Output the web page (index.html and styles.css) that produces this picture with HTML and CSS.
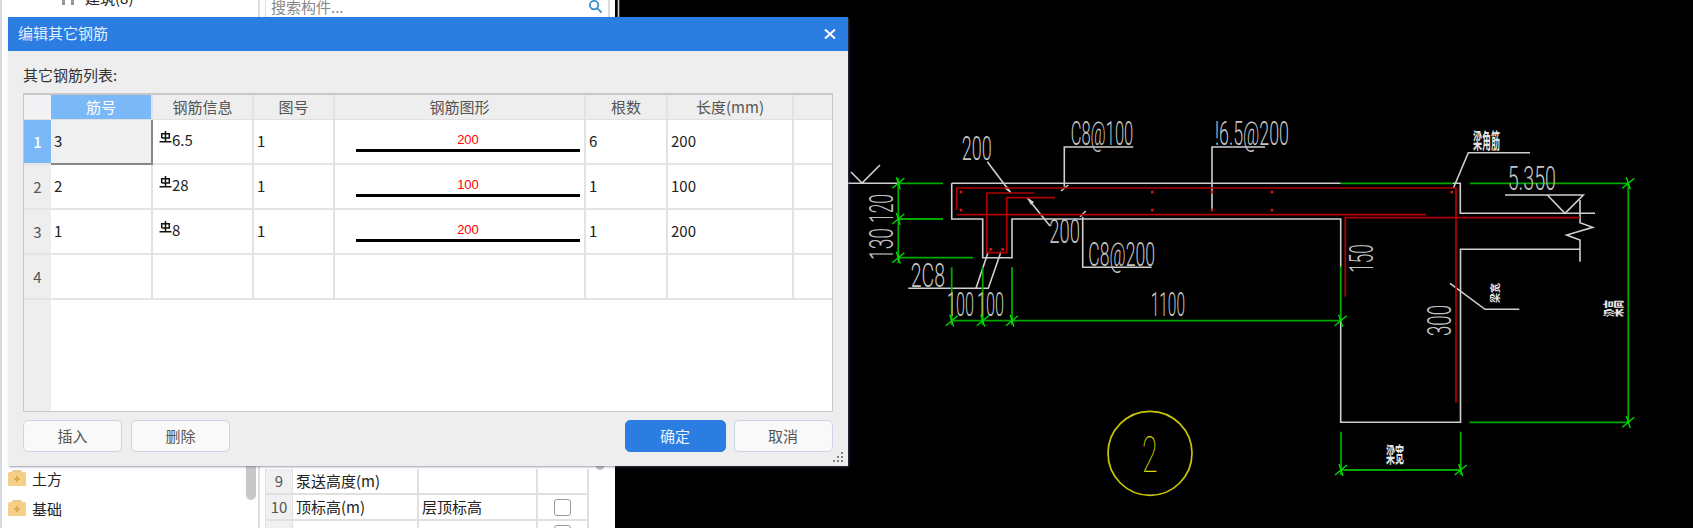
FILE: index.html
```html
<!DOCTYPE html>
<html lang="zh-CN">
<head>
<meta charset="utf-8">
<title>编辑其它钢筋</title>
<link rel="stylesheet" href="styles.css">
</head>
<body>
<div class="app">
  <aside class="tree">
    <div class="tree-row tree-row-top">
      <svg class="pillar" viewBox="0 0 16 10"><path d="M2 0h3v10H2zM11 0h3v10h-3z"/></svg>
      <span>建筑(8)</span>
    </div>
    <div class="tree-space"></div>
    <div class="tree-row">
      <svg class="folder" viewBox="0 0 18 17"><path class="folder-tab" d="M5 0h8l2 3H3z"/><rect class="folder-body" y="2" width="18" height="14" rx="1.5"/><path class="folder-plus" d="M9 6v6M6 9h6"/></svg>
      <span>土方</span>
    </div>
    <div class="tree-row">
      <svg class="folder" viewBox="0 0 18 17"><path class="folder-tab" d="M5 0h8l2 3H3z"/><rect class="folder-body" y="2" width="18" height="14" rx="1.5"/><path class="folder-plus" d="M9 6v6M6 9h6"/></svg>
      <span>基础</span>
    </div>
    <div class="tree-scroll"></div>
  </aside>

  <section class="props">
    <div class="search">
      <span>搜索构件...</span>
      <svg class="search-icon" viewBox="0 0 16 16"><circle cx="6.5" cy="6.5" r="4.5"/><path d="M10 10l4.5 4.5"/></svg>
    </div>
    <div class="props-space"></div>
    <div class="props-table">
      <div class="p-num">9</div><div class="p-cell">泵送高度(m)</div><div class="p-cell"></div><div class="p-cell"></div>
      <div class="p-num">10</div><div class="p-cell">顶标高(m)</div><div class="p-cell">层顶标高</div><div class="p-cell p-check"><span class="check"></span></div>
      <div class="p-num"></div><div class="p-cell"></div><div class="p-cell"></div><div class="p-cell p-check"><span class="check"></span></div>
    </div>
    <div class="props-scroll"></div>
  </section>

  <main class="canvas">
    <svg class="cad" viewBox="615 0 1078 528" width="1078" height="528">
      <defs>
        <g id="tk"><path d="M-6 5L6 -5M-2 -6L2 6"/></g>
      </defs>
      <g class="gray">
        <path d="M618.5 0V17"/>
        <path d="M848 183.3H897M851 172L862 183L880 165"/>
        <path d="M951.7 183.3H1340.7M951.7 183.3V219H982.7V257.7H1012V219H1340.7V266.7"/>
        <path d="M1453 183.3H1460.3V213.3H1595"/>
        <path d="M1340.7 320V422.3H1460.5V249.3H1580"/>
        <path d="M1580 261.7V240L1566.7 235L1592.7 227.3L1580 222.7V200"/>
        <path d="M1505 195H1583.3L1565 213.3L1547.3 195"/>
        <path d="M1530 152.7H1468.3L1453.3 188.3"/>
        <path d="M1450 283.3L1485 309.3H1519.3"/>
        <path d="M1133.3 147H1064.3V186.7M1061 191L1068.3 185"/>
        <path d="M1265 147H1212V210"/>
        <path d="M987.3 161.7L1010.7 192.7"/>
        <path d="M1050 226L1027.3 197.7"/>
        <path d="M1151.7 267.3H1082.7V216.7M1080 216.7L1085.7 211"/>
        <path d="M908.3 288.3H988.3L1001 251.7M976 288.3L988.3 251.7"/>
      </g>
      <path class="arrow" d="M1010.7 192.7L1004.5 188.5L1007.5 186.5Z"/>
      <path class="arrow" d="M1027.3 197.7L1034 202L1031 205Z"/>
      <g class="green">
        <path d="M897 183.3H943M898.3 178V263M898.3 219H943M898.3 257.7H973"/>
        <path d="M1340.7 183.3H1453M1470 183.3H1628.3V422.3H1469.5"/>
        <path d="M1340.7 266.7V320.7M951.7 320.7H1340.7M951.7 267.3V325M982.7 267.3V325M1012 267.3V325"/>
        <path d="M1341 431.7V475M1460.7 431.7V475M1341 470H1460.7"/>
      </g>
      <g class="tick">
        <use href="#tk" x="898.3" y="183.3"/><use href="#tk" x="898.3" y="219"/><use href="#tk" x="898.3" y="257.7"/>
        <use href="#tk" x="951.7" y="320.7"/><use href="#tk" x="982.7" y="320.7"/><use href="#tk" x="1012" y="320.7"/>
        <use href="#tk" x="1340.7" y="320.7"/><use href="#tk" x="1628.3" y="183.3"/><use href="#tk" x="1628.3" y="422.3"/>
        <use href="#tk" x="1341" y="470"/><use href="#tk" x="1460.7" y="470"/>
      </g>
      <g class="red">
        <path d="M956.7 210V188H1456V402.7"/>
        <path d="M956.7 214.7H1426"/>
        <path d="M1034.3 193H986.7V252.7H1006.7V197.7H1055"/>
        <path d="M1580 217.7H1345.3V296.7"/>
      </g>
      <g class="dots">
        <circle cx="961" cy="192" r="1.5"/><circle cx="961" cy="210" r="1.5"/>
        <circle cx="1152.3" cy="192" r="1.5"/><circle cx="1152.3" cy="210" r="1.5"/>
        <circle cx="1212" cy="192" r="1.5"/><circle cx="1212" cy="210" r="1.5"/>
        <circle cx="1272" cy="192" r="1.5"/><circle cx="1272" cy="210" r="1.5"/>
        <circle cx="990.7" cy="249.3" r="1.5"/><circle cx="1002.7" cy="249.3" r="1.5"/>
        <circle cx="1451.7" cy="192" r="1.5"/>
      </g>
      <g class="cad-text">
        <text x="1070.7" y="145" textLength="62.6" lengthAdjust="spacingAndGlyphs">C8@100</text>
        <text x="1215" y="145" textLength="74" lengthAdjust="spacingAndGlyphs">!6.5@200</text>
        <text x="961.7" y="160" textLength="30" lengthAdjust="spacingAndGlyphs">200</text>
        <text x="1049.3" y="243.3" textLength="30.7" lengthAdjust="spacingAndGlyphs">200</text>
        <text x="1088.3" y="265.7" textLength="66.7" lengthAdjust="spacingAndGlyphs">C8@200</text>
        <text x="910.7" y="286.7" textLength="34.3" lengthAdjust="spacingAndGlyphs">2C8</text>
        <text x="947" y="316" textLength="27" lengthAdjust="spacingAndGlyphs">100</text>
        <text x="977" y="316" textLength="27" lengthAdjust="spacingAndGlyphs">100</text>
        <text x="1150.7" y="316" textLength="34.3" lengthAdjust="spacingAndGlyphs">1100</text>
        <text x="1507.7" y="190" textLength="48.3" lengthAdjust="spacingAndGlyphs">5.350</text>
        <text transform="translate(893.3 223) rotate(-90)" textLength="29" lengthAdjust="spacingAndGlyphs">120</text>
        <text transform="translate(893.3 260) rotate(-90)" textLength="32" lengthAdjust="spacingAndGlyphs">130</text>
        <text transform="translate(1373.3 272.7) rotate(-90)" textLength="28.4" lengthAdjust="spacingAndGlyphs">150</text>
        <text transform="translate(1451 336) rotate(-90)" textLength="31" lengthAdjust="spacingAndGlyphs">300</text>
      </g>
      <g class="cad-cjk">
        <text x="1473" y="148" textLength="27" lengthAdjust="spacingAndGlyphs">梁角筋</text>
        <text x="1386" y="462" textLength="18" lengthAdjust="spacingAndGlyphs">梁宽</text>
        <text transform="translate(1621 317) rotate(-90)" textLength="17" lengthAdjust="spacingAndGlyphs">梁高</text>
        <text class="cad-cjk-small" transform="translate(1499 303) rotate(-90)" textLength="20" lengthAdjust="spacingAndGlyphs">梁宽</text>
      </g>
      <circle class="yellow" cx="1150" cy="453.3" r="42"/>
      <text class="yellow-text" x="1142" y="471.7" textLength="15.6" lengthAdjust="spacingAndGlyphs">2</text>
    </svg>
  </main>
</div>

<section class="dialog">
  <header class="dialog-title">
    <span>编辑其它钢筋</span>
    <svg class="close" viewBox="0 0 12 10"><path d="M1 0.5L11 9.5M11 0.5L1 9.5"/></svg>
  </header>
  <div class="dialog-body">
    <div class="list-label">其它钢筋列表:</div>
    <div class="grid-wrap">
      <div class="grid-row grid-head">
        <div class="corner"></div>
        <div class="hcell hcell-on">筋号</div>
        <div class="hcell">钢筋信息</div>
        <div class="hcell">图号</div>
        <div class="hcell">钢筋图形</div>
        <div class="hcell">根数</div>
        <div class="hcell">长度(mm)</div>
        <div class="hcell hcell-end"></div>
      </div>
      <div class="grid-row">
        <div class="rhead rhead-on">1</div>
        <div class="cell cell-on">3</div>
        <div class="cell cell-info"><svg class="grade" viewBox="0 0 12 11"><path d="M2.5 6.5V2.5H9.5V6.5H2.5M6 0V10M0.5 9.8H11.5"/></svg>6.5</div>
        <div class="cell">1</div>
        <div class="cell cell-shape"><span class="shape-num">200</span><span class="shape-bar"></span></div>
        <div class="cell">6</div>
        <div class="cell">200</div>
        <div class="cell cell-end"></div>
      </div>
      <div class="grid-row">
        <div class="rhead">2</div>
        <div class="cell">2</div>
        <div class="cell cell-info"><svg class="grade" viewBox="0 0 12 11"><path d="M2.5 6.5V2.5H9.5V6.5H2.5M6 0V10M0.5 9.8H11.5"/></svg>28</div>
        <div class="cell">1</div>
        <div class="cell cell-shape"><span class="shape-num">100</span><span class="shape-bar"></span></div>
        <div class="cell">1</div>
        <div class="cell">100</div>
        <div class="cell cell-end"></div>
      </div>
      <div class="grid-row">
        <div class="rhead">3</div>
        <div class="cell">1</div>
        <div class="cell cell-info"><svg class="grade" viewBox="0 0 12 11"><path d="M2.5 6.5V2.5H9.5V6.5H2.5M6 0V10M0.5 9.8H11.5"/></svg>8</div>
        <div class="cell">1</div>
        <div class="cell cell-shape"><span class="shape-num">200</span><span class="shape-bar"></span></div>
        <div class="cell">1</div>
        <div class="cell">200</div>
        <div class="cell cell-end"></div>
      </div>
      <div class="grid-row">
        <div class="rhead">4</div>
        <div class="cell"></div>
        <div class="cell"></div>
        <div class="cell"></div>
        <div class="cell"></div>
        <div class="cell"></div>
        <div class="cell"></div>
        <div class="cell cell-end"></div>
      </div>
      <div class="grid-fill"><div class="fill-head"></div></div>
    </div>
    <footer class="dialog-foot">
      <button class="btn" type="button">插入</button>
      <button class="btn" type="button">删除</button>
      <button class="btn btn-primary" type="button">确定</button>
      <button class="btn" type="button">取消</button>
    </footer>
  </div>
  <svg class="grip" viewBox="0 0 10 10"><path d="M8 0h2v2H8zM4 4h2v2H4zM8 4h2v2H8zM0 8h2v2H0zM4 8h2v2H4zM8 8h2v2H8z"/></svg>
</section>
</body>
</html>
```

FILE: styles.css
```css
* { box-sizing: border-box; }
html, body { margin: 0; height: 528px; overflow: hidden; background: #000; }
body { font-family: "Noto Sans CJK SC", "Liberation Sans", sans-serif; font-size: 15px; color: #333; position: relative; }

.app { display: flex; width: 1693px; height: 528px; }

/* tree column */
.tree { width: 260px; height: 528px; background: #fff; border-left: 2px solid #d5d9e4; border-right: 2px solid #ddd; display: flex; flex-direction: column; position: relative; overflow: hidden; padding-bottom: 5px; }
.tree-row { height: 30px; flex: none; display: flex; align-items: center; padding-left: 6px; gap: 6px; color: #222; }
.tree-row-top { margin-top: -18px; padding-left: 58px; gap: 9px; }
.tree-space { flex: 1; }
.pillar { width: 16px; height: 10px; margin-top: 6px; }
.pillar path { fill: #999; }
.folder { width: 18px; height: 17px; flex: none; }
.folder-tab { fill: #e8c98c; }
.folder-body { fill: #f3cf88; }
.folder-plus { stroke: #e0ac4c; stroke-width: 2; fill: none; }
.tree-scroll { position: absolute; left: 244px; top: 440px; width: 10px; height: 60px; border-radius: 5px; background: #c8c8c8; }

/* properties column */
.props { width: 355px; height: 528px; background: #fff; display: flex; flex-direction: column; position: relative; overflow: hidden; padding: 0 5px 0 5px; }
.search { height: 26px; margin-top: -7px; flex: none; display: flex; align-items: center; justify-content: space-between; border-left: 1px solid #ddd; border-right: 2px solid #ddd; padding: 0 5px 0 5px; color: #888; }
.search-icon { width: 15px; height: 15px; margin-top: 1px; }
.search-icon circle, .search-icon path { fill: none; stroke: #3d90c8; stroke-width: 2; }
.props-space { flex: 1; }
.props-table { display: grid; grid-template-columns: 27px 126px 119px 51px; grid-auto-rows: 26px; width: 323px; margin-bottom: -19px; border-left: 1px solid #e0e0e0; flex: none; }
.p-num { background: #f0f0f0; color: #555; display: flex; align-items: center; justify-content: center; padding-bottom: 1px; border-right: 1px solid #e0e0e0; border-bottom: 2px solid #e0e0e0; }
.p-cell { display: flex; align-items: center; padding: 0 0 1px 3px; color: #222; border-right: 2px solid #e0e0e0; border-bottom: 2px solid #e0e0e0; }
.p-check { justify-content: center; padding: 0; }
.check { width: 17px; height: 17px; border: 1.5px solid #999; border-radius: 3px; background: #fff; }
.props-scroll { position: absolute; left: 336px; top: 440px; width: 8px; height: 30px; border-radius: 4px; background: #c0c0c0; }

/* drawing */
.canvas { flex: 1; height: 528px; background: #000; overflow: hidden; }
.cad { display: block; }
.gray path { fill: none; stroke: #cfcfcf; stroke-width: 1.6; }
.arrow { fill: #d8d8d8; }
.green path { fill: none; stroke: #00a800; stroke-width: 1.8; }
.tick use { fill: none; stroke: #00e000; stroke-width: 1.3; }
.red path { fill: none; stroke: #b00000; stroke-width: 1.7; }
.dots circle { fill: #e01010; stroke: none; }
.cad-text text { font-family: Roboto, "Liberation Sans", sans-serif; font-weight: 300; font-size: 34px; fill: #c4c4c4; }
.cad-cjk text { font-family: "Noto Sans CJK SC", sans-serif; font-weight: 700; font-size: 21px; fill: #e4e4e4; }
.cad-cjk .cad-cjk-small { font-size: 10px; }
.yellow { fill: none; stroke: #c8c800; stroke-width: 1.7; }
.yellow-text { font-family: Roboto, "Liberation Sans", sans-serif; font-weight: 100; font-size: 50px; fill: #d8d800; }

/* dialog */
.dialog { position: absolute; left: 8px; top: 17px; width: 840px; height: 449px; background: #eee; display: flex; flex-direction: column; box-shadow: 1px 1px 2px rgba(80, 90, 120, .6); }
.dialog-title { height: 34px; flex: none; background: #2b7de1; color: #e3efff; display: flex; align-items: center; justify-content: space-between; padding: 0 12px 3px 10px; }
.close { width: 12px; height: 10px; margin-top: 3px; }
.close path { fill: none; stroke: #fff; stroke-width: 2; }
.dialog-body { flex: 1; display: flex; flex-direction: column; padding: 14px 15px 14px; min-height: 0; }
.list-label { height: 20px; line-height: 20px; color: #333; margin-bottom: 8px; flex: none; }

.grid-wrap { flex: 1; min-height: 0; background: #fff; border: 1px solid #c8c8c8; border-top-width: 2px; display: flex; flex-direction: column; margin-bottom: 8px; }
.grid-row { display: grid; grid-template-columns: 27px 102px 101px 81px 251px 82px 126px 1fr; height: 45px; flex: none; }
.grid-head { height: 25px; }
.corner { background: #f3f3f6; border-bottom: 2px solid #e0e0e0; }
.hcell { background: #eee; color: #555; text-align: center; line-height: 24px; border-right: 2px solid #e2e2e2; border-bottom: 2px solid #e0e0e0; }
.hcell-on { background: #7ab8f8; color: #fff; }
.hcell-end { border-right: 0; }
.rhead { background: #eee; color: #555; display: flex; align-items: center; justify-content: center; padding-bottom: 1px; border-bottom: 2px solid #e4e4e4; }
.rhead-on { background: #7ab8f8; color: #fff; font-weight: 500; }
.cell { display: flex; align-items: center; padding: 0 0 2px 3px; color: #222; background: #fff; border-right: 2px solid #e2e2e2; border-bottom: 2px solid #e4e4e4; }
.cell-on { background: #f0f0f0; border-right-color: #868686; border-bottom-color: #868686; }
.cell-info { padding: 0 0 5px 6px; }
.cell-shape { flex-direction: column; align-items: stretch; padding: 11px 4px 0 21px; }
.cell-end { border-right: 0; background: #fff; }
.grade { width: 13px; height: 12px; margin-top: -4px; flex: none; }
.grade path { fill: none; stroke: #111; stroke-width: 1.4; }
.shape-num { font-family: "Liberation Sans", sans-serif; font-size: 13px; line-height: 18px; color: #f00; text-align: center; }
.shape-bar { height: 3px; margin-top: 0; background: #000; }
.grid-fill { flex: 1; display: flex; }
.fill-head { width: 27px; background: #eee; }

.dialog-foot { display: flex; flex: none; gap: 9px; margin-right: 0.5px; }
.btn { width: 99px; height: 32px; font: inherit; color: #555; background: #f9f9fa; border: 1px solid #ccd4e4; border-radius: 5px; padding: 0 0 2px; }
.btn-primary { margin-left: auto; margin-right: -1px; width: 101px; background: #2b7de1; border-color: #2b7de1; color: #e8f2ff; }
.grip { position: absolute; right: 5px; bottom: 4px; width: 10px; height: 10px; }
.grip path { fill: #7c8088; }
```
